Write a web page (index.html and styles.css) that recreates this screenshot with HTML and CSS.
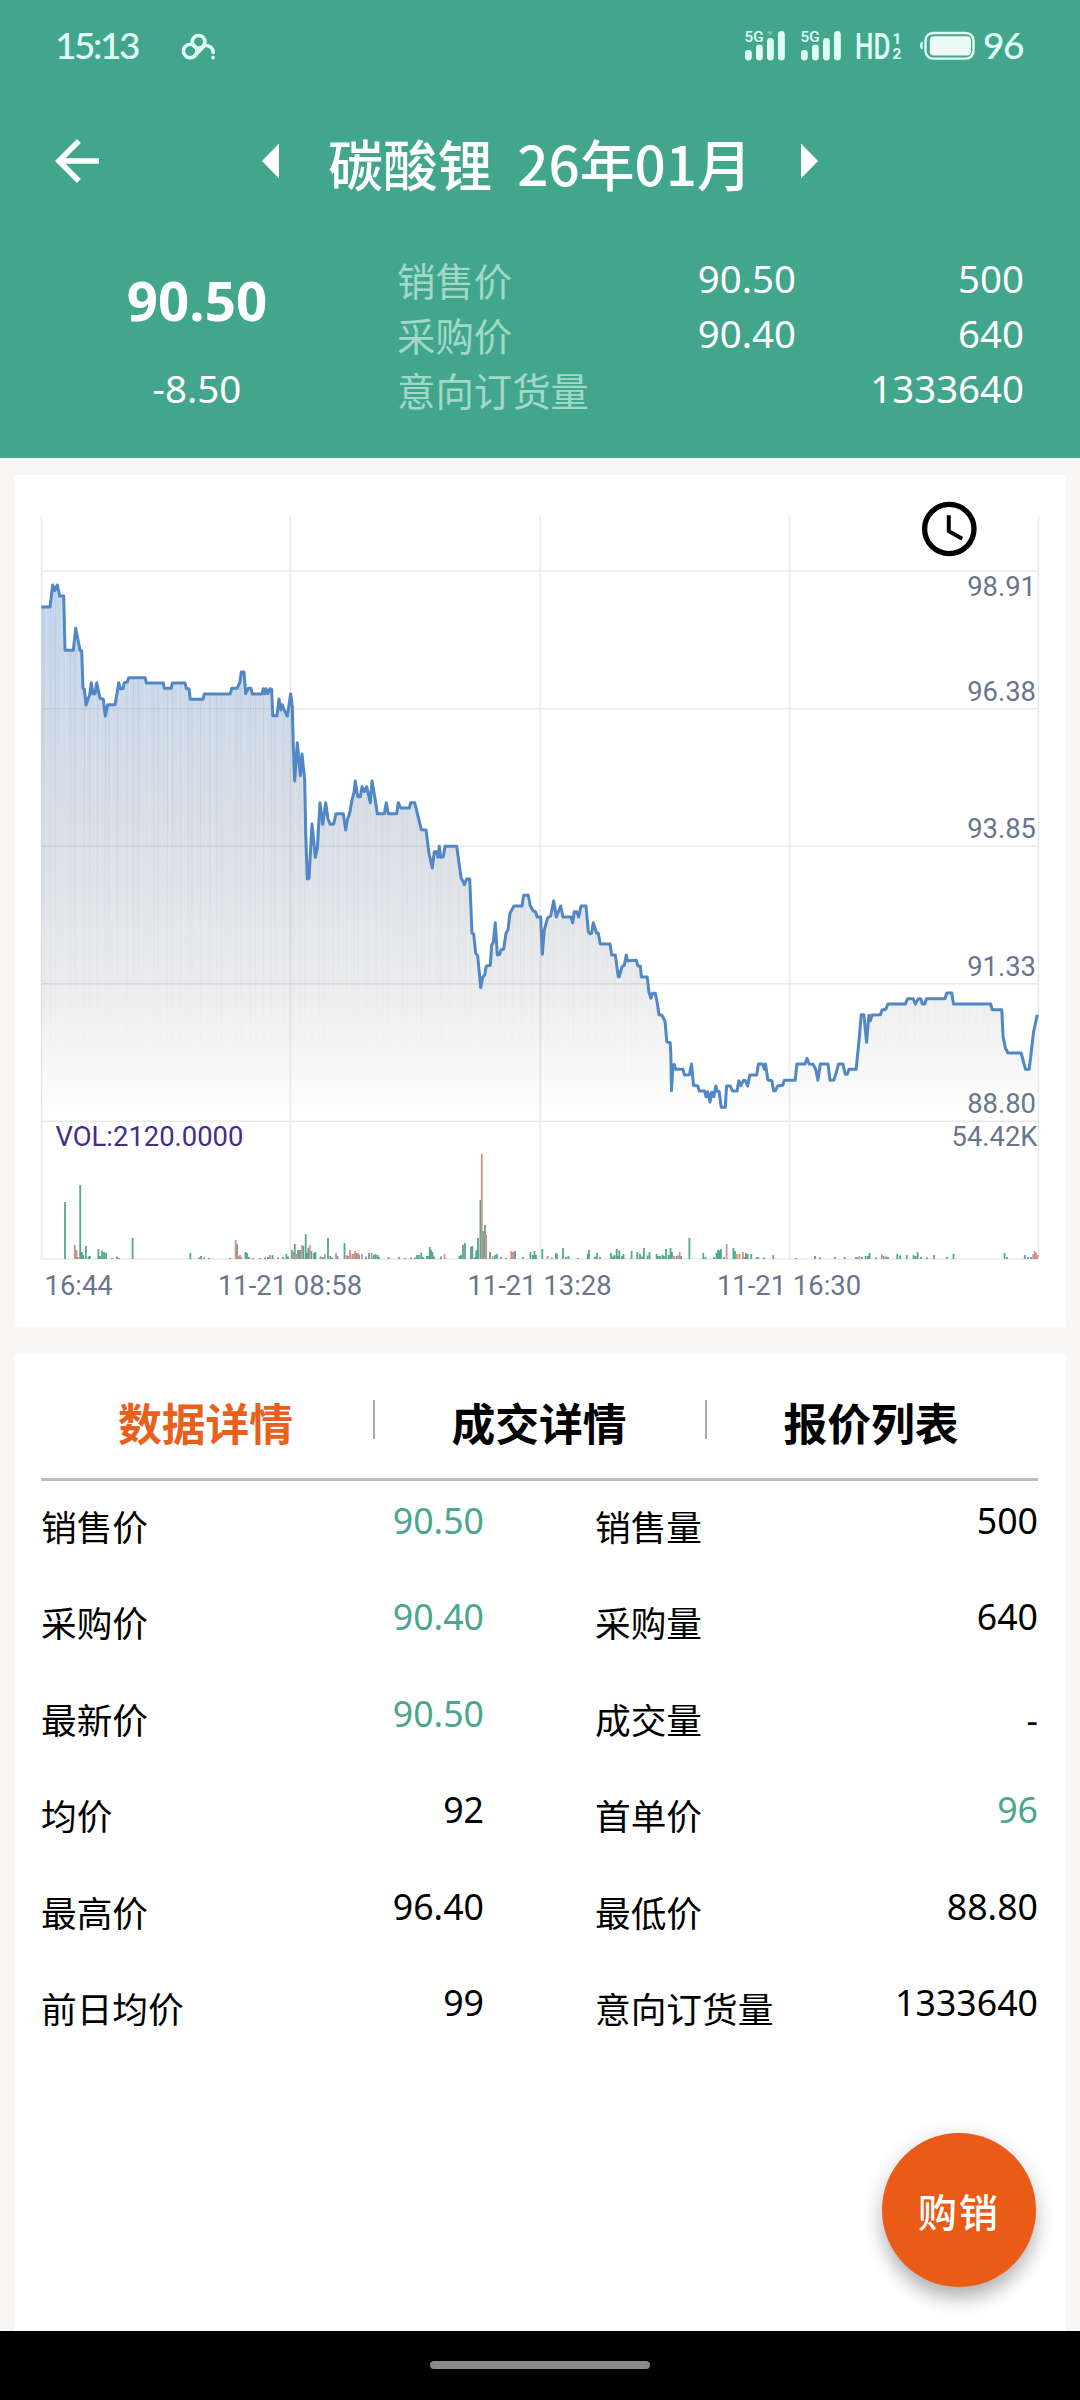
FILE: index.html
```html
<!DOCTYPE html>
<html lang="zh-CN">
<head>
  <meta charset="UTF-8">
  <meta name="viewport" content="width=device-width, initial-scale=1.0">
  <title>碳酸锂 26年01月</title>
  <link rel="stylesheet" href="styles.css">
</head>
<body>
  <header class="header">
    <div class="status-bar">
      <span class="time">15:13</span>
      <svg class="cloud" width="36" height="30" viewBox="180 31 36 30" fill="none" stroke="#e0fff4" stroke-width="3.6" stroke-linecap="round">
        <circle cx="190.2" cy="51" r="6.8"/>
        <circle cx="198.6" cy="41.8" r="6.3"/>
        <path d="M195 55.5L204.5 45.5C209.5 45 213 48 213.2 52.5"/>
        <circle cx="213" cy="57.6" r="1.9" fill="#e0fff4" stroke="none"/>
      </svg>
      <svg class="status-icons" width="236" height="40" viewBox="740 26 236 40" fill="#e0fff4">
        <g id="signal">
          <text x="744.5" y="42" font-size="15.5" font-weight="500" textLength="19" lengthAdjust="spacingAndGlyphs">5G</text>
          <rect x="745" y="50" width="6.8" height="10.5" rx="3.4"/>
          <rect x="756" y="44.5" width="6.8" height="16" rx="3.4"/>
          <rect x="767" y="38" width="6.8" height="22.5" rx="3.4"/>
          <rect x="778" y="31" width="6.8" height="29.5" rx="3.4"/>
        </g>
        <use href="#signal" x="56"/>
        <path d="M767 31.5h6.4l-3.2 4z" opacity=".35"/>
        <text x="855" y="58.5" font-size="37" font-weight="500" textLength="35.5" lengthAdjust="spacingAndGlyphs">HD</text>
        <text x="892.5" y="43.5" font-size="15.5" font-weight="700">1</text>
        <text x="892.5" y="58.5" font-size="15.5" font-weight="700">2</text>
        <path d="M922.6 41.5v8c-3.6-.6-3.6-7.4 0-8z"/>
        <rect x="925.5" y="33" width="48" height="25.6" rx="7.5" fill="none" stroke="#e0fff4" stroke-width="2.4"/>
        <rect x="929.8" y="36.2" width="41.2" height="19.2" rx="4" fill="#eef8f5"/>
      </svg>
      <span class="battery">96</span>
    </div>
    <div class="title-bar">
      <svg class="back" width="66" height="66" viewBox="0 0 24 24" fill="#fff"><path d="M20 11H7.83l5.59-5.59L12 4l-8 8 8 8 1.41-1.41L7.83 13H20v-2z"/></svg>
      <svg class="prev" width="17" height="36" viewBox="0 0 17 36" fill="#fff"><path d="M0 18L17 .5v35z"/></svg>
      <h1>碳酸锂&nbsp; 26年01月</h1>
      <svg class="next" width="17" height="36" viewBox="0 0 17 36" fill="#fff"><path d="M17 18L0 .5v35z"/></svg>
    </div>
    <div class="quote">
      <div class="last">
        <div class="price">90.50</div>
        <div class="change">-8.50</div>
      </div>
      <div class="book">
        <span class="name">销售价</span><span class="num">90.50</span><span class="num">500</span>
        <span class="name">采购价</span><span class="num">90.40</span><span class="num">640</span>
        <span class="name">意向订货量</span><span class="num"></span><span class="num">1333640</span>
      </div>
    </div>
  </header>

  <main class="content">
    <section class="card chart-card">
      <svg class="chart" width="1052" height="852" viewBox="14 475 1052 852">
        <defs>
          <linearGradient id="area" gradientUnits="userSpaceOnUse" x1="0" y1="585" x2="0" y2="1121">
            <stop offset="0" stop-color="#3d80d2" stop-opacity=".32"/>
            <stop offset=".23" stop-color="#32639f" stop-opacity=".24"/>
            <stop offset=".5" stop-color="#3c5578" stop-opacity=".18"/>
            <stop offset=".75" stop-color="#3c4150" stop-opacity=".1"/>
            <stop offset="1" stop-color="#505050" stop-opacity="0"/>
          </linearGradient>
          <linearGradient id="fade" gradientUnits="userSpaceOnUse" x1="0" y1="585" x2="0" y2="1121">
            <stop offset="0" stop-color="#fff"/>
            <stop offset="1" stop-color="#fff" stop-opacity="0"/>
          </linearGradient>
          <mask id="fadeMask"><rect x="41" y="570" width="998" height="551" fill="url(#fade)"/></mask>
          <pattern id="streaks" patternUnits="userSpaceOnUse" width="83" height="600">
            <path d="M3.5 0V600M12.5 0V600M17.5 0V600M29 0V600M40.5 0V600M46.5 0V600M61.5 0V600M66 0V600M78.5 0V600" stroke="#fff" stroke-opacity=".2"/>
            <path d="M1.5 0V600M6.5 0V600M14.5 0V600M22.5 0V600M26 0V600M34.5 0V600M44 0V600M50.5 0V600M55.5 0V600M70.5 0V600M75 0V600" stroke="#5b7fae" stroke-opacity=".12"/>
          </pattern>
        </defs>

        <!-- grid -->
        <path d="M41.5 516V1259M290.3 516V1259M540.2 516V1259M789.5 516V1259M1038.5 516V1259M41 571H1039M41 708.7H1039M41 846.3H1039M41 983.7H1039M41 1121.2H1039M41 1259H1039" fill="none" stroke="#e9e9e9" stroke-width="1.5"/>

        <!-- price -->
        <path id="fill" fill="url(#area)"/>
        <path id="fillStreaks" fill="url(#streaks)" mask="url(#fadeMask)"/>
        <polyline id="line" class="price-line" points="41.3,607 50,607 52.7,585 54.7,590.5 57.3,585 59.7,596 63.7,596 65,650.3 73.3,650.3 75.7,628.3 80,650.3 81.7,651 83,688.3 84.3,689 86,705 88,699 89.7,695 91.3,682.7 93,693.7 95,693.7 96.7,682.7 100,698.3 103.3,699.3 105.3,716 107.7,704.7 115,704.7 117,693.3 118.7,682.7 120.3,688.7 123,688.7 124.3,682.7 127.3,682 128.7,677.7 145.3,677.7 146.3,683 163.3,683 164.3,688.3 171.3,688.3 172.3,683 185,683 186.3,688.3 189,689 190.3,699.3 203,699.3 204.3,694 230.3,694 231.7,688.3 237.3,688.3 240,681.7 241.3,672 244,672 245.7,693.7 248.3,688.3 251,688.3 252.3,694 262,694 263.3,688.7 264.7,693.7 266,688.7 267.7,693.7 270,688.7 271.7,689.3 272.7,715.7 277,715.7 279,699 281,710 282.3,704.7 284,709.3 287.3,716 290.7,694 292.3,706.7 293.3,746.7 294.7,781 297.3,742.7 300.3,775.7 302,754 304.7,780
          305.7,833 307.3,879 309,878.3 312,824 315.3,857.3 317.3,848.3 320,802.7 322.7,824.3 325.7,802.7 328,819 330.3,824.3 333.7,824 336,813.7 343.3,813.7 345.7,830 347.3,820 349.7,813.3 352,800 354,792.7 355.3,781 357.7,796.7 360.3,796.7 362,786.7 364.3,791.7 366.7,786.7 370.3,802.7 372,781 375,798.3 377.3,813.7 384.3,813.7 386.3,802.7 388.3,813.7 396.7,813.7 398.3,802.7 400.7,808 409.3,808 410.7,802.7 414.7,802.7 421.3,829.7 426,830 429,853.3 432.3,868 434.3,851.7 436.7,851.7 438,857.3 439.3,846.3 440.7,857.3 443.3,856.7 445,846.3 456.7,846.3 461,877.3 464.3,884.7 466.7,879 469.7,879 472,933.3 473.7,934 475.7,953.3 477.7,955.7 480.7,987.7 482.7,977.3 484.7,975 486.3,966 490.3,965.3 491.7,945 493.3,942.3 495.3,922.7 497.3,955 499.7,954.3 501,950 503.7,949 506,933.3 508,930 510,913.3 514,906 522,906 523.7,895.3 528.3,895.3 530.3,905.7 533.3,911 535.7,912 537,917 540.7,917 542.3,954.3 544.3,930 547.7,917.7 550.7,916 553.7,900.7 556.3,917 560.7,906 563,917 571,917 572.7,922.7 574.3,911.7 576.7,911.7 578.7,917 581,906 586,906 588.3,931.7 590,933.7 591.7,933.3 593.3,922.7 596.7,933.3 598.3,933.3 600.3,944 610,944 611.7,955 615.3,955 618.3,976.7 619.3,976.7 622,966.7 624.3,965.3 626.3,955 627.3,960.7
          636.3,960.3 637.7,965.7 640.4,966.3 641.4,977 647.2,977 648.9,991.7 650.9,998.3 652.6,993.3 655.3,993.3 657.3,1003.3 659,1014.7 662,1015.3 665.1,1021.7 666.8,1041.7 670.2,1042.7 670.8,1053.3 671.5,1090.7 672.9,1066.7 674.2,1064.3 675.6,1069.3 683,1069.3 684.4,1075 689.4,1074.7 691.5,1064 693.5,1085.3 697.9,1086 699.2,1091 704.6,1091 706,1096.7 707.7,1091.7 710,1102 711.7,1092.3 713.8,1096.7 715.8,1086 717.1,1091 719.2,1091.7 721.2,1107.3 725.3,1107.3 726.6,1086 730.3,1086 732.4,1091 737.1,1091 738.8,1080.7 740.8,1085.7 743.5,1080.3 745.5,1080.7 747.6,1086 749.9,1075 756.7,1075 758.4,1064 762.4,1064 764.5,1069.3 765.5,1064 767.9,1080 771.9,1080.7 773.6,1090.7 775.3,1090.7 777.7,1086 782.7,1085.3 784.4,1080.3 795.2,1080.3 796.9,1064 805,1064 807,1058.3 809.1,1064 813.2,1064.3 815.9,1070 817.9,1080.3 820.3,1064 828,1064 830,1080.3 833.8,1080 836.1,1073.3 838.5,1064 842.9,1064 845.3,1074.3 847.3,1074.3 849,1069.3 856.1,1069.3 859.1,1040 861.2,1014.7 863.9,1014.7 866.6,1042.3 868.9,1015.3 870.3,1020.7 872,1015 880.4,1014.7 882.1,1010 885.8,1009.3 887.9,1004 905.4,1004 907.5,998.7 913.2,998.7 915.3,1004 918.3,998.7 920.7,998.7 922.4,1004 924.7,1004 926.4,998.7 945,998.7 946.7,993 951.8,993 953.5,1004 990.6,1004 992.3,1009.7 1001.8,1009.7 1003.1,1036.7 1005.5,1048.3 1007.9,1053 1021.1,1053 1025.5,1069.3 1029.2,1069.3 1033.6,1031.7 1037.3,1014.7"/>

        <!-- volume -->
        <path class="vol up" id="volUp"/>
        <path class="vol down" id="volDown"/>

        <g class="axis" text-anchor="end">
          <text x="1036" y="596">98.91</text>
          <text x="1036" y="700.5">96.38</text>
          <text x="1036" y="838">93.85</text>
          <text x="1036" y="976">91.33</text>
          <text x="1036" y="1112.7">88.80</text>
          <text x="1037.5" y="1145.5">54.42K</text>
        </g>
        <g class="axis">
          <text class="vol-label" x="55.5" y="1145.5">VOL:2120.0000</text>
          <text x="44.5" y="1294.7">16:44</text>
          <text x="290" y="1294.7" text-anchor="middle">11-21 08:58</text>
          <text x="539.5" y="1294.7" text-anchor="middle">11-21 13:28</text>
          <text x="789" y="1294.7" text-anchor="middle">11-21 16:30</text>
        </g>

        <!-- period button -->
        <g fill="none" stroke="#000">
          <circle cx="949.3" cy="529" r="24.7" stroke-width="5.3"/>
          <path d="M948.8 515.3V531.2L962.2 538.8" stroke-width="4"/>
        </g>
      </svg>
    </section>

    <section class="card detail-card">
      <nav class="tabs">
        <a class="tab active">数据详情</a>
        <a class="tab">成交详情</a>
        <a class="tab">报价列表</a>
      </nav>
      <div class="details">
        <div class="row"><span class="label">销售价</span><span class="value green">90.50</span></div>
        <div class="row"><span class="label">销售量</span><span class="value">500</span></div>
        <div class="row"><span class="label">采购价</span><span class="value green">90.40</span></div>
        <div class="row"><span class="label">采购量</span><span class="value">640</span></div>
        <div class="row"><span class="label">最新价</span><span class="value green">90.50</span></div>
        <div class="row"><span class="label">成交量</span><span class="value empty">-</span></div>
        <div class="row"><span class="label">均价</span><span class="value">92</span></div>
        <div class="row"><span class="label">首单价</span><span class="value green">96</span></div>
        <div class="row"><span class="label">最高价</span><span class="value">96.40</span></div>
        <div class="row"><span class="label">最低价</span><span class="value">88.80</span></div>
        <div class="row"><span class="label">前日均价</span><span class="value">99</span></div>
        <div class="row"><span class="label">意向订货量</span><span class="value">1333640</span></div>
      </div>
      <button class="fab">购销</button>
    </section>
  </main>

  <footer class="nav-bar"><span class="pill"></span></footer>

  <script src="chart.js"></script>
</body>
</html>
```
FILE: styles.css
```css
* { box-sizing: border-box; }
body { margin: 0; width: 1080px; height: 2400px; display: flex; flex-direction: column; overflow: hidden; background: #f8f7f5; color: #000; font-family: "Noto Sans", "Noto Sans CJK SC", sans-serif; }
svg { display: block; flex: none; }

/* header */
.header { height: 458px; background: #42a68d; color: #fff; }
.status-bar { height: 92px; display: flex; align-items: center; padding: 0 55px; color: #e0fff4; }
.time { width: 125px; padding-bottom: 2px; font: 500 37px/44px Lato, sans-serif; letter-spacing: -2.4px; }
.status-icons { margin-left: auto; font-family: Roboto, sans-serif; }
.battery { margin-left: 7px; width: 42px; padding-bottom: 2px; font: 500 37px/44px Lato, sans-serif; letter-spacing: -1.5px; }
.title-bar { height: 138px; display: flex; align-items: center; padding-left: 44px; }
.prev { margin-left: 152px; }
.title-bar h1 { margin: 0; width: 522px; padding-top: 2px; text-align: center; white-space: nowrap; font: 500 54.8px/80px "Noto Sans CJK SC", sans-serif; }
.quote { display: flex; padding: 20px 56px 0 0; }
.last { width: 397px; padding-right: 3px; text-align: center; }
.price { font-size: 54.6px; font-weight: 700; line-height: 100px; }
.change { font-size: 38.5px; line-height: 76px; }
.book { flex: 1; display: grid; grid-template-columns: 200px 199px 1fr; grid-auto-rows: 55px; padding-top: 1px; font-size: 38.4px; line-height: 55px; }
.name { padding-top: 1px; font-family: "Noto Sans CJK SC", sans-serif; color: #a0d9c8; white-space: nowrap; }
.num { text-align: right; }

/* cards */
.content { flex: 1; display: flex; flex-direction: column; gap: 27px; padding: 17px 14px 0; }
.card { background: #fff; }
.chart-card { height: 852px; }
.price-line { fill: none; stroke: #5087c4; stroke-width: 3; stroke-linejoin: round; }
.axis { font-family: Roboto, sans-serif; font-size: 27.4px; fill: #67768c; }
.vol-label { fill: #472b8c; }
.vol { fill: none; stroke-width: 1.8; }
.up { stroke: #55a68f; }
.down { stroke: #d3908b; }

.detail-card { flex: 1; position: relative; padding: 0 28px 0 27px; }
.tabs { display: flex; height: 127px; border-bottom: 3px solid #bdbdbd; }
.tab { flex: 1; display: flex; justify-content: center; align-items: flex-start; padding: 36px 4px 0 0; font: 700 43.8px/64px "Noto Sans CJK SC", sans-serif; }
.tab + .tab { padding-right: 3px; }
.tab + .tab::before { content: ""; width: 2px; height: 39px; margin: 10px auto 0 -1px; background: #a9a9a9; }
.tab + .tab::after { content: ""; margin-left: auto; }
.active { color: #e8601c; }
.details { display: grid; grid-template-columns: 443px 443px; column-gap: 111px; grid-auto-rows: 96.4px; }
.row { display: flex; justify-content: space-between; font-size: 35.7px; line-height: 50px; padding-top: 14px; }
.label { font-family: "Noto Sans CJK SC", sans-serif; padding-top: 6px; }
.empty { padding-top: 6px; }
.green { color: #4ba68e; }
.fab { position: absolute; right: 30px; bottom: 44px; width: 154px; height: 154px; padding: 0; border: none; border-radius: 50%; background: #ea5b17; color: #fff; font: 500 39px/56px "Noto Sans CJK SC", sans-serif; letter-spacing: 2px; box-shadow: 0 14px 20px -3px rgba(0,0,0,.26), 0 3px 24px rgba(0,0,0,.12); }

.nav-bar { height: 69px; background: #000; display: flex; justify-content: center; padding-top: 30px; }
.pill { width: 220px; height: 8px; border-radius: 4px; background: #8b8b8b; }
```
FILE: chart.js
```js
// close the area under the price line
const area = 'M' + document.getElementById('line').getAttribute('points').trim().split(/\s+/).join('L') + 'V1121H41.3Z';
document.getElementById('fill').setAttribute('d', area);
document.getElementById('fillStreaks').setAttribute('d', area);

// volume bars: [x, height]
const up = [[65,57],[80.2,74],[81.9,7],[83.2,4],[85.9,13],[88.6,2.5],[90,3],[98.4,10],[100,3],[102,8.5],[104,7],[106,6],[112,1],[117,2.5],[119,1],[132.6,21],[190.4,6],[199,1.5],[201,3],[204,1.5],[209,1],[230,1],[237,15],[245.5,7],[247,6],[249,2],[253,1],[260,1],[265,1.5],[268,2],[272.5,4],[278,1.5],[283,2],[286.4,5],[288,2.5],[292,9],[294.8,15],[298,9],[300,9],[303.3,13],[305.7,25],[307,6],[308.4,11],[311.4,8],[314,6],[315.5,7],[320.5,2.5],[323,2],[328,21],[330.3,3],[332,1.5],[337.4,3],[344.5,16],[347.5,3],[356.4,6],[359,4.5],[366,2.5],[369,6],[373.6,4],[375.6,5],[377.7,4],[379,2],[388.5,2],[399,2],[405,1],[411,1.5],[415,1.5],[417,4],[419,4],[421.3,6.5],[423,2],[427,3],[428.5,3],[429.7,12],[431,9],[432.4,7],[434,2.5],[441,2.5],[459.5,3],[461,4],[463,14],[465,16],[471,12],[472.3,13],[475,2],[476.4,9],[478,21],[480.4,59],[483,28],[485,34],[490,7],[495,4],[497,5],[501,2],[506,1],[515,8],[523,2],[530.5,7],[533,4],[534.5,8],[536,4],[542.3,10],[556,6],[557,5],[563,11],[566,2],[568.4,3],[578,1],[587.7,5],[589,9],[595,2.5],[597,6],[600,2],[611,6],[613,2.5],[614.5,4],[616.7,10],[618,3],[619.4,8.5],[622,3],[623.5,5],[631.6,8],[637.4,7],[640,5],[642,2.5],[644,11],[647.5,3.5],[649.5,7],[656.6,5],[658,3],[660,3],[662.4,4],[664,3],[666,10],[668.5,4],[670.5,11],[672,7],[676.6,3],[681,3],[689.4,21],[703.3,6],[705.5,2],[714,2],[716.5,6],[718,9],[719.5,8.5],[721,10],[724,2],[733.4,11],[735,8],[744,2],[746,6],[747.6,5],[751.3,5],[757,2],[764,1.5],[773.3,4],[796,1],[815,3],[820,1.5],[835,2],[844.6,2],[856,2],[862,2],[865.6,3],[868,3],[869.6,6],[876,1.5],[883.5,3],[886,2.5],[888,2],[897.3,5],[900,3.5],[906.8,4],[913.5,4],[915.5,3],[917.6,7],[921,2],[927,1.5],[934,4],[947,2],[953.5,5],[1004.5,6],[1007,2],[1024.8,4],[1028,2],[1031,2]];
const down = [[74.8,14],[76.5,9],[78,2],[235.7,19],[238.4,3],[240,4],[241.3,2],[270,4],[293.5,7],[296.3,5],[302,14],[309.7,14],[325,5],[336,6],[346.6,4],[348.5,3],[350,9],[352.3,5],[354,5],[355,8],[358,6],[362,5],[371.6,6],[444.6,5],[481.8,105],[486.2,25],[492.6,3],[511.2,8],[513,7],[547.6,3],[552,1.5],[674,3],[678,3.5],[679.6,7],[726.6,15],[737,5],[739.5,5],[743,7],[758.5,2],[857.5,2],[859.5,3],[881.8,5],[1033.2,5],[1034.6,8],[1036,6.5],[1037.3,4]];
const bars = list => list.map(([x, h]) => `M${x} 1259V${1259 - h}`).join('');
document.getElementById('volUp').setAttribute('d', bars(up));
document.getElementById('volDown').setAttribute('d', bars(down));
```
